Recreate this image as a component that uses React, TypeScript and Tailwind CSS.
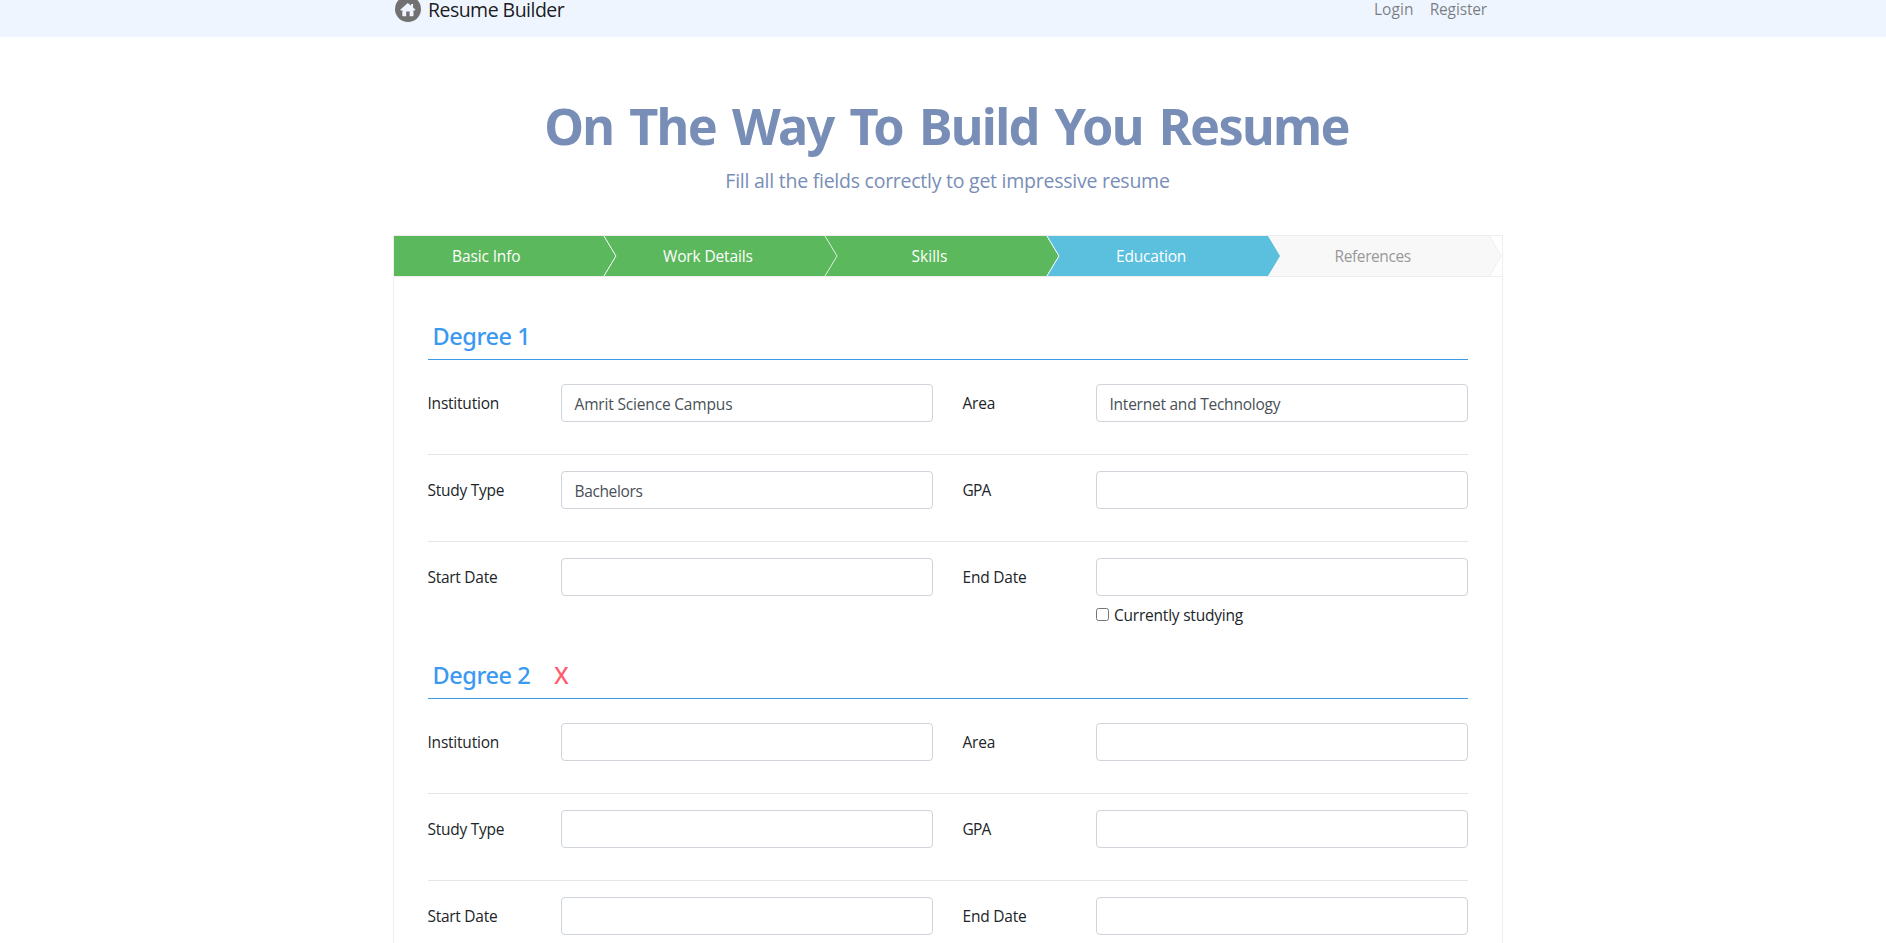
type StepState = "done" | "active" | "todo";
type Step = { label: string; tracking: string; state: StepState };

const STEPS: Step[] = [
  { label: "Basic Info", tracking: "tracking-[-0.13px]", state: "done" },
  { label: "Work Details", tracking: "tracking-[-0.14px]", state: "done" },
  { label: "Skills", tracking: "tracking-[0px]", state: "done" },
  { label: "Education", tracking: "tracking-[-0.22px]", state: "active" },
  { label: "References", tracking: "tracking-[-0.4px]", state: "todo" },
];

const STEP_FILL = { done: "#5cb85c", active: "#5bc0de", todo: "#f8f8f8" };
const STEP_TEXT = { done: "text-white", active: "text-white", todo: "text-[#999999]" };

type FieldDef = { label: string; tracking: string; value?: string; valueTracking?: string; checkbox?: boolean };

const fields = (institution = "", area = "", studyType = ""): [FieldDef, FieldDef][] => [
  [
    { label: "Institution", tracking: "tracking-[-0.22px]", value: institution, valueTracking: "tracking-[-0.17px]" },
    { label: "Area", tracking: "tracking-[-0.2px]", value: area, valueTracking: "tracking-[-0.24px]" },
  ],
  [
    { label: "Study Type", tracking: "tracking-[-0.25px]", value: studyType, valueTracking: "tracking-[-0.36px]" },
    { label: "GPA", tracking: "tracking-[-0.8px]" },
  ],
  [
    { label: "Start Date", tracking: "tracking-[-0.28px]" },
    { label: "End Date", tracking: "tracking-[-0.22px]", checkbox: true },
  ],
];

function HomeIcon() {
  return (
    <svg className="-mt-1 size-[26px] shrink-0" viewBox="0 0 26 26" aria-hidden="true">
      <circle cx="13" cy="13" r="13" fill="#717171" />
      <path
        d="M12.8 7 L16.1 9.8 V8 H18.1 V11.6 L20.5 13.7 L19.5 14.8 L18.5 14 V19.5 Q18.5 20.2 17.8 20.2 H14.6 V15.4 H11.2 V20.2 H8 Q7.3 20.2 7.3 19.5 V14 L6.2 14.8 L5.2 13.7 Z"
        fill="#eff5ff"
      />
    </svg>
  );
}

function Header() {
  return (
    <header className="h-[37px] bg-[#eff5ff]">
      <div className="ml-[395px] flex w-[1092px] items-start justify-between">
        <div className="flex items-start gap-[7px]">
          <HomeIcon />
          <span className="text-[19.5px] leading-5 tracking-[-0.53px] text-black/90">Resume Builder</span>
        </div>
        <nav className="flex gap-4 text-[15.5px] leading-[19px] text-black/50">
          <a className="tracking-[0.1px]">Login</a>
          <a className="tracking-[-0.15px]">Register</a>
        </nav>
      </div>
    </header>
  );
}

function StepBar() {
  return (
    <ol className="flex h-10 text-[15.5px] leading-10">
      {STEPS.map((step, i) => {
        const first = i === 0;
        const last = i === STEPS.length - 1;
        return (
          <li key={step.label} className="relative flex-1">
            <svg
              className="absolute inset-0 h-10 w-full overflow-visible"
              viewBox="0 0 221.6 40"
              preserveAspectRatio="none"
            >
              <path
                d={first ? "M0 0 H209.6 L221.6 20 L209.6 40 H0 Z" : "M-12 0 H209.6 L221.6 20 L209.6 40 H-12 L0 20 Z"}
                fill={STEP_FILL[step.state]}
              />
              {!first && !last && (
                <path d="M-12 0 L0 20 L-12 40" fill="none" stroke="#ffffff" strokeOpacity="0.8" strokeWidth="1" />
              )}
              {last && <path d="M209.6 0 L221.2 20 L209.6 40" fill="none" stroke="#efefef" />}
            </svg>
            <div className={`relative pr-[37px] text-center ${STEP_TEXT[step.state]}`}>
              <span className={step.tracking}>{step.label}</span>
            </div>
          </li>
        );
      })}
    </ol>
  );
}

function Field({ def }: { def: FieldDef }) {
  return (
    <div className="flex w-[505px] justify-between">
      <span className={`-ml-[0.5px] pt-[7px] text-[15.5px] leading-6 text-[#212529] ${def.tracking}`}>{def.label}</span>
      <div className="w-[372px]">
        <div className="h-[38px] rounded border border-[#ced4da] bg-white pt-[7px] pr-3 pl-[12.5px] text-[15.5px] leading-6 text-[#495057]">
          <span className={def.valueTracking}>{def.value}</span>
        </div>
        {def.checkbox && (
          <label className="mt-[7px] flex h-6 gap-[5px] text-[15.5px] leading-6 tracking-[-0.22px] text-[#212529]">
            <span className="mt-[5px] size-[13px] rounded-[2.5px] border border-[#767676] bg-white" />
            Currently studying
          </label>
        )}
      </div>
    </div>
  );
}

function Degree({ title, removable, rows }: { title: string; removable?: boolean; rows: [FieldDef, FieldDef][] }) {
  return (
    <section className="h-[339px]">
      <h2 className="flex h-[43px] items-start gap-6 border-b border-[#3d9ae8] pl-[4.5px] font-['Noto_Sans',sans-serif] text-[23.5px] leading-[38px] font-medium tracking-[-0.45px] text-[#3b99f0]">
        {title}
        {removable && <button className="leading-[38px] font-medium text-[#ff5c6c]">X</button>}
      </h2>
      <div className="pt-6">
        {rows.map((row, i) => (
          <div key={row[0].label}>
            {i > 0 && <hr className="mt-8 mb-4 border-t border-black/10" />}
            <div className="flex h-[38px] justify-between">
              <Field def={row[0]} />
              <Field def={row[1]} />
            </div>
          </div>
        ))}
      </div>
    </section>
  );
}

export default function App() {
  return (
    <div className="h-[943px] w-full overflow-hidden bg-white font-['Open_Sans','Noto_Sans',sans-serif]">
      <Header />
      <main className="ml-[393px] w-[1110px]">
        <div className="flex h-[198px] flex-col items-center pt-[51px] text-[#788eb7]">
          <h1 className="mr-[3px] font-['Noto_Sans',sans-serif] text-[50.4px] leading-[76px] font-bold tracking-[-1.7px] [word-spacing:4.5px]">
            On The Way To Build You Resume
          </h1>
          <p className="mt-[2px] mr-px text-[19.5px] leading-[30px] tracking-[-0.25px]">
            Fill all the fields correctly to get impressive resume
          </p>
        </div>
        <div className="h-[760px] border border-[#eeeeee]">
          <div className="border-b border-[#eeeeee]">
            <StepBar />
          </div>
          <div className="px-[34px] pt-10">
            <Degree title="Degree 1" rows={fields("Amrit Science Campus", "Internet and Technology", "Bachelors")} />
            <Degree title="Degree 2" removable rows={fields()} />
          </div>
        </div>
      </main>
    </div>
  );
}
